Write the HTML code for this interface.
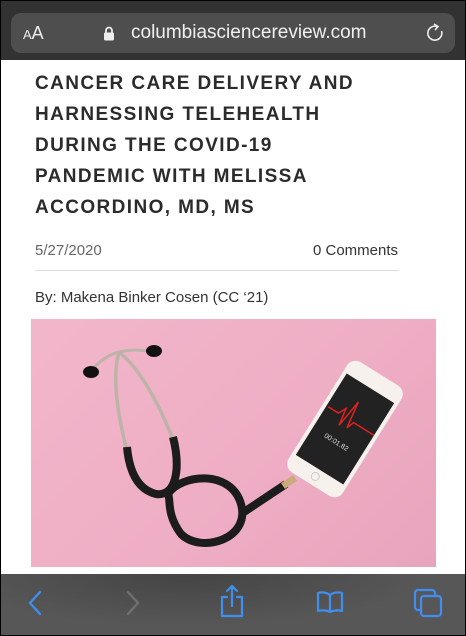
<!DOCTYPE html>
<html><head><meta charset="utf-8"><style>
*{margin:0;padding:0;box-sizing:border-box}
html,body{width:466px;height:636px;overflow:hidden;background:#000}
#wrap{position:absolute;left:1px;top:1px;width:464px;height:634px;background:#fff;overflow:hidden}
#top{position:absolute;left:0;top:0;width:464px;height:59px;background:#323232}
#pill{position:absolute;left:10px;top:12px;width:444px;height:40px;background:#4e4e4e;border-radius:10px;color:#eee;font-family:"Liberation Sans",sans-serif}
#aa{position:absolute;left:12px;top:10px;font-size:18px}
#aa small{font-size:13px}
#url{position:absolute;left:120px;top:9px;font-size:19px;color:#f0f0f0}
#lock{position:absolute;left:92px;top:13px}
#reload{position:absolute;left:414px;top:10px}
.t{position:absolute;left:34px;font-family:"Liberation Sans",sans-serif;font-weight:bold;font-size:19px;letter-spacing:1.4px;color:#2b2b2b;white-space:nowrap}
.m{position:absolute;font-family:"Liberation Sans",sans-serif;font-size:15px;color:#555}
#rule{position:absolute;left:34px;top:269px;width:364px;height:1px;background:#ddd}
#img{position:absolute;left:30px;top:318px;width:405px;height:248px;background:linear-gradient(135deg,#f2b6ca,#eeadc4 60%,#e8a4bc)}
#bot{position:absolute;left:0;top:573px;width:464px;height:61px;background:radial-gradient(ellipse at 40% 0%,#444 0%,#575757 60%)}
</style></head><body><div id="wrap">
<div id="top"><div id="pill">
<div id="aa"><small>A</small>A</div>
<svg id="lock" width="12" height="15" viewBox="0 0 12 15"><path d="M3 7V4.5a3 3 0 0 1 6 0V7" stroke="#eee" stroke-width="1.8" fill="none"/><rect x="1" y="6.5" width="10" height="8" rx="1.5" fill="#eee"/></svg>
<div id="url">columbiasciencereview.com</div>
<svg id="reload" width="20" height="20" viewBox="0 0 20 20"><path d="M12 3.5A7 7 0 1 0 16.5 8" stroke="#eee" stroke-width="1.6" fill="none"/><path d="M9 1l4 2.5-3 3.5" stroke="#eee" stroke-width="1.6" fill="none"/></svg>
</div></div>
<div class="t" style="top:72px">CANCER CARE DELIVERY AND</div>
<div class="t" style="top:103px">HARNESSING TELEHEALTH</div>
<div class="t" style="top:134px">DURING THE COVID-19</div>
<div class="t" style="top:165px">PANDEMIC WITH MELISSA</div>
<div class="t" style="top:196px">ACCORDINO, MD, MS</div>
<div class="m" style="left:34px;top:241px;color:#666">5/27/2020</div>
<div class="m" style="left:312px;top:241px;color:#333">0 Comments</div>
<div id="rule"></div>
<div class="m" style="left:34px;top:288px;color:#333">By: Makena Binker Cosen (CC ‘21)</div>
<div id="img"><svg width="405" height="248" viewBox="0 0 405 248">
<path d="M60 52 C70 40,80 35,88 33 C95 31,110 30,122 33" stroke="#bdb3a8" stroke-width="3" fill="none"/>
<path d="M88 33 C80 60,88 100,95 128" stroke="#bdb3a8" stroke-width="3.5" fill="none"/>
<path d="M88 33 C110 50,130 90,141 118" stroke="#bdb3a8" stroke-width="3.5" fill="none"/>
<path d="M96 128 C98 150,105 170,125 175 C145 178,150 150,142 118" stroke="#1c1c1c" stroke-width="8" fill="none"/>
<path d="M137 175 C150 155,200 150,210 185 C220 220,170 235,150 215 C135 195,140 180,137 175" stroke="#1c1c1c" stroke-width="8" fill="none"/>
<path d="M210 195 C225 185,240 175,255 165" stroke="#1c1c1c" stroke-width="8" fill="none"/>
<path d="M252 167l12-8" stroke="#c9aa7a" stroke-width="7"/>
<ellipse cx="60" cy="53" rx="8" ry="6" fill="#111"/><ellipse cx="123" cy="32" rx="8" ry="6" fill="#111"/>
<g transform="rotate(32 314 110)"><rect x="282" y="45" width="64" height="130" rx="10" fill="#f7f1ee"/><rect x="286" y="62" width="56" height="96" fill="#222"/><path d="M288 100h12l4-8 3 18 4-30 4 28 3-8h24" stroke="#e02020" stroke-width="1.5" fill="none"/><text x="300" y="128" font-family="Liberation Sans" font-size="7" fill="#ddd">00:01.82</text><circle cx="314" cy="166" r="4" fill="none" stroke="#ccc"/></g>
</svg></div>
<div id="bot">
<svg style="position:absolute;left:26px;top:16px" width="16" height="26" viewBox="0 0 16 26"><path d="M13 2L3 13l10 11" stroke="#3f8ef0" stroke-width="2.4" fill="none" stroke-linecap="round" stroke-linejoin="round"/></svg>
<svg style="position:absolute;left:124px;top:16px" width="16" height="26" viewBox="0 0 16 26"><path d="M3 2l10 11L3 24" stroke="#707070" stroke-width="2.4" fill="none" stroke-linecap="round" stroke-linejoin="round"/></svg>
<svg style="position:absolute;left:218px;top:10px" width="26" height="34" viewBox="0 0 26 34"><path d="M8 13H3v19h20V13h-5M13 2v20M8 7l5-5 5 5" stroke="#3f8ef0" stroke-width="2.2" fill="none" stroke-linecap="round" stroke-linejoin="round"/></svg>
<svg style="position:absolute;left:315px;top:16px" width="28" height="24" viewBox="0 0 28 24"><path d="M14 5C10 2,5 2,2 3v18c3-1,8-1,12 1c4-2,9-2,12-1V3c-3-1-8-1-12 2zM14 5v17" stroke="#3f8ef0" stroke-width="2.2" fill="none" stroke-linejoin="round"/></svg>
<svg style="position:absolute;left:412px;top:14px" width="30" height="30" viewBox="0 0 30 30"><rect x="2" y="2" width="20" height="20" rx="3" stroke="#3f8ef0" stroke-width="2.2" fill="none"/><rect x="8" y="8" width="20" height="20" rx="3" stroke="#3f8ef0" stroke-width="2.2" fill="#575757"/></svg>
</div>
</div></body></html>
